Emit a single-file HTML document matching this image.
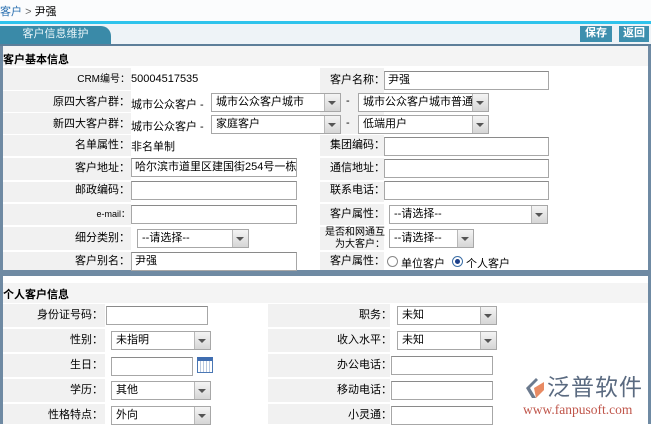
<!DOCTYPE html>
<html><head><meta charset="utf-8">
<style>
*{margin:0;padding:0;box-sizing:border-box}
body{width:651px;height:424px;overflow:hidden;background:#fff;position:relative;font-family:"Liberation Sans","Noto Sans CJK SC","WenQuanYi Zen Hei",sans-serif;font-size:11px;color:#000}
.a{position:absolute}
.g{position:absolute;background:#f1f1f1}
.w{position:absolute;background:#fff}
.lb{position:absolute;text-align:right;white-space:nowrap;font-size:11px;line-height:14px}
.in{position:absolute;border:1px solid #a7a7a7;border-top-color:#8a8a8a;background:#fff;height:19px;font-size:11px;line-height:17px;padding-left:3px;white-space:nowrap;overflow:hidden}
.sel{position:absolute;border:1px solid #a7a7a7;background:#fff;height:19px;font-size:11px;line-height:17px;padding-left:4px;white-space:nowrap;overflow:hidden}
.sel:after{content:"";position:absolute;right:0;top:0;width:15px;height:17px;background:linear-gradient(#f4f4f4,#d6d6d6);border-left:1px solid #b8b8b8}
.sel:before{content:"";position:absolute;right:4px;top:7px;border-left:4px solid transparent;border-right:4px solid transparent;border-top:4px solid #555;z-index:2}
.hd{position:absolute;font-weight:bold;font-size:11px}
</style></head><body>
<div class="a" style="left:0;top:0;width:651px;height:21px;background:#fbfcfd"></div>
<div class="a" style="left:0;top:5px;font-size:11px;line-height:14px"><span style="color:#2a6fb0">客户</span> <span style="color:#666">&gt;</span> 尹强</div>
<div class="a" style="left:0;top:21px;width:651px;height:3px;background:#2fc3ec"></div>
<div class="a" style="left:0;top:24px;width:651px;height:21px;background:#eef3f7"></div>
<div class="a" style="left:0;top:26px;width:111px;height:19px;background:#3a8aa8;border-radius:0 10px 0 0;color:#e8f4f8;text-align:center;font-size:11px;line-height:17px">客户信息维护</div>
<div class="a" style="left:580px;top:26px;width:32px;height:16px;background:#3d8fae;color:#fff;font-weight:bold;font-size:11px;line-height:15px;text-align:center">保存</div>
<div class="a" style="left:619px;top:26px;width:30px;height:16px;background:#3d8fae;color:#fff;font-weight:bold;font-size:11px;line-height:15px;text-align:center">返回</div>
<div class="a" style="left:0;top:44px;width:651px;height:2px;background:#5d7e99"></div>
<div class="a" style="left:0;top:46px;width:651px;height:227px;border:3px solid #6f8aa3;border-top:none;background:#fff"></div>
<div class="a" style="left:3px;top:46px;width:645px;height:20px;background:#f4f4f4"></div>
<div class="hd" style="left:3px;top:51px">客户基本信息</div>
<div class="g" style="left:3px;top:68px;width:128px;height:202px"></div>
<div class="g" style="left:320px;top:68px;width:64px;height:202px"></div>
<div class="w" style="left:3px;top:156px;width:645px;height:2px"></div>
<div class="w" style="left:3px;top:180px;width:645px;height:2px"></div>
<div class="w" style="left:3px;top:202px;width:645px;height:2px"></div>
<div class="w" style="left:3px;top:225px;width:645px;height:2px"></div>
<div class="w" style="left:3px;top:250px;width:645px;height:2px"></div>
<div class="w" style="left:3px;top:90px;width:128px;height:1px"></div>
<div class="w" style="left:3px;top:112px;width:128px;height:1px"></div>
<div class="w" style="left:3px;top:134px;width:645px;height:1px"></div>

<div class="lb" style="right:521px;top:73px;font-size:10px">CRM编号：</div><div class="a" style="left:131px;top:73px">50004517535</div>
<div class="lb" style="right:521px;top:95px">原四大客户群：</div><div class="a" style="left:131px;top:96px">城市公众客户 -</div>
<div class="sel" style="left:211px;top:93px;width:130px">城市公众客户城市</div><div class="a" style="left:346px;top:95px">-</div>
<div class="sel" style="left:358px;top:93px;width:131px">城市公众客户城市普通</div>
<div class="lb" style="right:521px;top:117px">新四大客户群：</div><div class="a" style="left:131px;top:118px">城市公众客户 -</div>
<div class="sel" style="left:211px;top:115px;width:130px">家庭客户</div><div class="a" style="left:346px;top:117px">-</div>
<div class="sel" style="left:358px;top:115px;width:131px">低端用户</div>
<div class="lb" style="right:521px;top:138px">名单属性：</div><div class="a" style="left:131px;top:138px">非名单制</div>
<div class="lb" style="right:521px;top:161px">客户地址：</div><div class="in" style="left:131px;top:158px;width:166px">哈尔滨市道里区建国街254号一栋</div>
<div class="lb" style="right:521px;top:183px">邮政编码：</div><div class="in" style="left:131px;top:181px;width:166px"></div>
<div class="lb" style="right:521px;top:207px;font-size:9px">e-mail：</div><div class="in" style="left:131px;top:205px;width:166px"></div>
<div class="lb" style="right:521px;top:231px">细分类别：</div><div class="sel" style="left:137px;top:229px;width:112px">--请选择--</div>
<div class="lb" style="right:521px;top:254px">客户别名：</div><div class="in" style="left:131px;top:252px;width:166px">尹强</div>

<div class="lb" style="right:266px;top:73px">客户名称：</div><div class="in" style="left:384px;top:71px;width:165px">尹强</div>
<div class="lb" style="right:266px;top:138px">集团编码：</div><div class="in" style="left:384px;top:137px;width:165px"></div>
<div class="lb" style="right:266px;top:161px">通信地址：</div><div class="in" style="left:384px;top:159px;width:165px"></div>
<div class="lb" style="right:266px;top:183px">联系电话：</div><div class="in" style="left:384px;top:181px;width:165px"></div>
<div class="lb" style="right:266px;top:207px">客户属性：</div><div class="sel" style="left:389px;top:205px;width:159px">--请选择--</div>
<div class="lb" style="right:266px;top:227px;line-height:12px;font-size:10px">是否和网通互<br>为大客户：</div><div class="sel" style="left:389px;top:229px;width:85px">--请选择--</div>
<div class="lb" style="right:266px;top:254px">客户属性：</div>
<div class="a" style="left:387px;top:256px;width:11px;height:11px;border:1px solid #888;border-radius:50%;background:#fff"></div>
<div class="a" style="left:401px;top:255px">单位客户</div>
<div class="a" style="left:452px;top:256px;width:11px;height:11px;border:1px solid #3b6ea5;border-radius:50%;background:#fff"><div style="width:5px;height:5px;margin:2px;border-radius:50%;background:#1b3f8a"></div></div>
<div class="a" style="left:466px;top:255px">个人客户</div>

<div class="a" style="left:0;top:273px;width:651px;height:151px;border-left:3px solid #6f8aa3;border-right:3px solid #6f8aa3;border-top:3px solid #6f8aa3;background:#fff"></div>
<div class="a" style="left:3px;top:283px;width:645px;height:20px;background:#f4f4f4"></div>
<div class="hd" style="left:3px;top:286px">个人客户信息</div>
<div class="g" style="left:3px;top:304px;width:102px;height:120px"></div>
<div class="g" style="left:268px;top:304px;width:122px;height:120px"></div>
<div class="w" style="left:3px;top:327px;width:645px;height:2px"></div>
<div class="w" style="left:3px;top:352px;width:645px;height:2px"></div>
<div class="w" style="left:3px;top:377px;width:645px;height:2px"></div>
<div class="w" style="left:3px;top:402px;width:645px;height:2px"></div>

<div class="lb" style="right:548px;top:308px">身份证号码：</div><div class="in" style="left:106px;top:306px;width:102px"></div>
<div class="lb" style="right:548px;top:333px">性别：</div><div class="sel" style="left:111px;top:331px;width:100px">未指明</div>
<div class="lb" style="right:548px;top:358px">生日：</div><div class="in" style="left:111px;top:357px;width:82px"></div>
<div class="a" style="left:197px;top:357px;width:16px;height:16px;border:1px solid #4a77b4;background:repeating-linear-gradient(90deg,#fff 0 2px,#b9c9e0 2px 3px);border-top:4px solid #3f6db0"></div>
<div class="lb" style="right:548px;top:383px">学历：</div><div class="sel" style="left:111px;top:381px;width:100px">其他</div>
<div class="lb" style="right:548px;top:408px">性格特点：</div><div class="sel" style="left:111px;top:406px;width:100px">外向</div>

<div class="lb" style="right:259px;top:308px">职务：</div><div class="sel" style="left:397px;top:306px;width:100px">未知</div>
<div class="lb" style="right:259px;top:333px">收入水平：</div><div class="sel" style="left:397px;top:331px;width:100px">未知</div>
<div class="lb" style="right:259px;top:358px">办公电话：</div><div class="in" style="left:391px;top:356px;width:102px"></div>
<div class="lb" style="right:259px;top:383px">移动电话：</div><div class="in" style="left:391px;top:381px;width:102px"></div>
<div class="lb" style="right:259px;top:408px">小灵通：</div><div class="in" style="left:391px;top:406px;width:102px"></div>

<svg class="a" style="left:522px;top:376px" width="24" height="24" viewBox="0 0 24 24"><path d="M14 2 L4 12 L10 22 L14 22 L8 12 L16 4Z" fill="#6b7a8e"/><path d="M12 12 L22 6 L22 14 L14 22Z" fill="#e88a63"/></svg>
<div class="a" style="left:547px;top:373px;font-size:23px;color:#5a6a80;letter-spacing:1px;line-height:28px">泛普软件</div>
<div class="a" style="left:523px;top:402px;font-family:'Liberation Serif',serif;font-size:13.5px;color:#c0564b">www.fanpusoft.com</div>
</body></html>
